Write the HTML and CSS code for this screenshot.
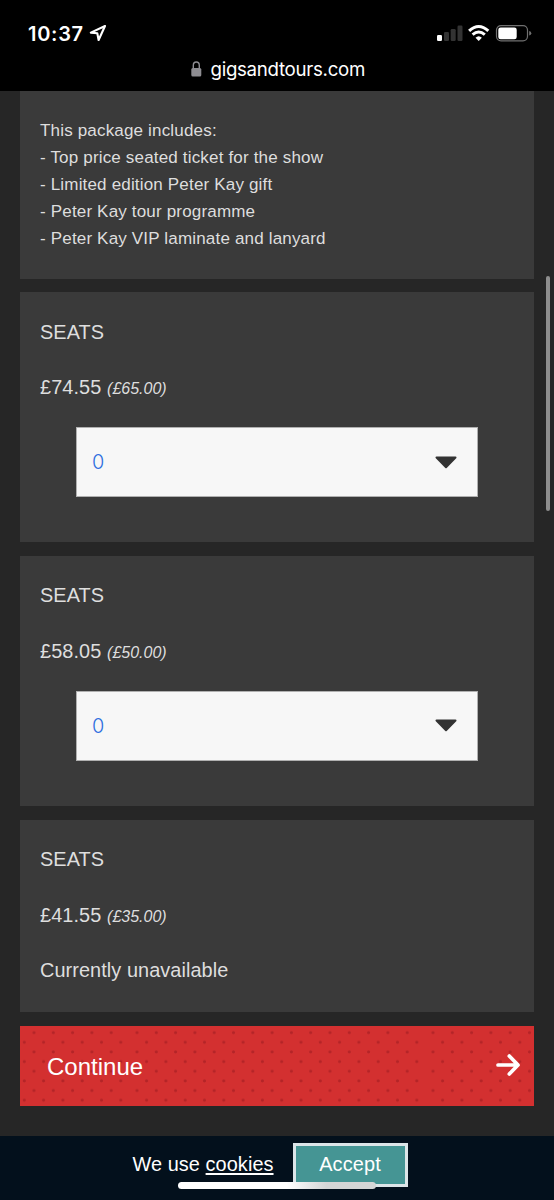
FILE: index.html
```html
<!DOCTYPE html>
<html lang="en">
<head>
<meta charset="utf-8">
<title>gigsandtours.com</title>
<link rel="stylesheet" href="styles.css">
</head>
<body>
<header class="browser-bar">
  <div class="status">
    <span class="time">10:37</span>
    <svg class="location" width="18" height="18" viewBox="0 0 18 18"><path d="M16 2 1.8 8.6 8.3 9.3 9.6 16Z" fill="none" stroke="#fff" stroke-width="2.1" stroke-linejoin="round"/></svg>
    <svg class="indicators" width="96" height="20" viewBox="0 0 96 20">
      <g fill="#333"><rect x="7" y="8" width="5" height="9" rx="1.2"/><rect x="13.7" y="5" width="5" height="12" rx="1.2"/><rect x="20.5" y="1.5" width="5" height="15.5" rx="1.2"/></g>
      <rect x="0" y="11" width="5" height="6" rx="1.2" fill="#fff"/>
      <g fill="none" stroke="#fff" stroke-width="3"><path d="M32.1 6.9Q41.7-1.9 51.3 6.9"/><path d="M35.6 10.7Q41.7 5.4 47.8 10.7"/></g>
      <path d="M38.5 13.7Q41.7 10.7 44.9 13.7L41.7 17Z" fill="#fff"/>
      <rect x="59.5" y="1.6" width="31" height="15.2" rx="4.5" fill="none" stroke="#707070" stroke-width="1.2"/>
      <rect x="61.3" y="3.4" width="18.4" height="11.8" rx="2.3" fill="#fff"/>
      <path d="M92.2 7Q94.3 7.4 94.3 9.3T92.2 11.6Z" fill="#707070"/>
    </svg>
  </div>
  <div class="address">
    <svg width="11" height="16" viewBox="0 0 11 16"><rect x=".3" y="7" width="10" height="8.5" rx="1.5" fill="#8e8d92"/><path d="M2.3 8V4.5C2.3-.1 8.3-.1 8.3 4.5V8" fill="none" stroke="#8e8d92" stroke-width="1.4"/></svg>
    <span>gigsandtours.com</span>
  </div>
</header>
<main class="page">
  <section class="card package">
    <p>This package includes:<br>- Top price seated ticket for the show<br>- Limited edition Peter Kay gift<br>- Peter Kay tour programme<br>- Peter Kay VIP laminate and lanyard</p>
  </section>
  <section class="card seats">
    <h2>SEATS</h2>
    <p class="price">£74.55 <em>(£65.00)</em></p>
    <div class="select"><span>0</span><svg width="22" height="13" viewBox="0 0 22 13"><path d="M1.5 1.5H20.5L11 11.2Z" fill="#333" stroke="#333" stroke-width="2" stroke-linejoin="round"/></svg></div>
  </section>
  <section class="card seats">
    <h2>SEATS</h2>
    <p class="price">£58.05 <em>(£50.00)</em></p>
    <div class="select"><span>0</span><svg width="22" height="13" viewBox="0 0 22 13"><path d="M1.5 1.5H20.5L11 11.2Z" fill="#333" stroke="#333" stroke-width="2" stroke-linejoin="round"/></svg></div>
  </section>
  <section class="card unavailable">
    <h2>SEATS</h2>
    <p class="price">£41.55 <em>(£35.00)</em></p>
    <p class="note">Currently unavailable</p>
  </section>
  <div class="continue">
    <svg class="dots" width="514" height="80" viewBox="0 0 514 80">
      <defs><pattern id="dot" width="19.3" height="19.3" patternUnits="userSpaceOnUse"><circle cx="14" cy="6.6" r="1.6"/><circle cx="4.3" cy="16.2" r="1.6"/></pattern></defs>
      <rect width="105" height="80" fill="url(#dot)"/>
      <g transform="translate(103)"><rect x="9" width="289" height="80" fill="url(#dot)"/></g>
      <g transform="translate(399)"><rect x="9" width="106" height="80" fill="url(#dot)"/></g>
    </svg>
    <span class="label">Continue</span>
    <svg class="arrow" width="24" height="22" viewBox="0 0 24 22"><path d="M2 11H21M13.3 2 22 11 13.3 20" fill="none" stroke="#fff" stroke-width="3.7" stroke-linecap="round" stroke-linejoin="round"/></svg>
  </div>
</main>
<footer class="cookie-bar">
  <p>We use <a>cookies</a></p>
  <button>Accept</button>
</footer>
<div class="scrollbar"></div>
<div class="home-indicator"></div>
</body>
</html>
```

FILE: styles.css
```css
* { box-sizing: border-box; }
body {
  margin: 0;
  width: 554px;
  height: 1200px;
  position: relative;
  display: flex;
  flex-direction: column;
  overflow: hidden;
  background: #262626;
  color: #dedede;
  font-family: "Liberation Sans", Arial, sans-serif;
}
h2, p { margin: 0; font-weight: normal; }
svg { display: block; flex: none; }
.browser-bar {
  height: 91px;
  background: #000;
  color: #fff;
  font-family: Inter, sans-serif;
}
.status {
  height: 57px;
  padding: 24px 21px 0 28px;
  display: flex;
  align-items: flex-start;
}
.time { font-size: 20px; line-height: 20px; font-weight: 600; letter-spacing: 0.7px; }
.location { margin-left: 5px; }
.indicators { margin-left: auto; }
.address {
  display: flex;
  gap: 9px;
  align-items: center;
  padding-left: 190.5px;
  height: 24px;
  font-size: 18.7px;
  letter-spacing: -0.3px;
}
.page {
  height: 1045px;
  padding: 0 20px;
  display: flex;
  flex-direction: column;
  gap: 13.5px;
}
.card { background: #3a3a3a; padding: 0 20px; flex: none; }
.package {
  height: 187.5px;
  padding-top: 27.4px;
  font-size: 17.05px;
  line-height: 26.85px;
  letter-spacing: 0.16px;
}
.seats { height: 250.3px; }
.unavailable { height: 192.5px; }
h2 {
  padding-top: 26.5px;
  font-size: 19.9px;
  line-height: 27px;
  letter-spacing: 0.1px;
}
.price {
  height: 53.5px;
  padding-top: 27.5px;
  font-size: 19.9px;
  line-height: 28px;
  letter-spacing: 0.1px;
}
.price em { font-size: 16px; letter-spacing: 0; }
.note { padding-top: 29.5px; font-size: 19.9px; line-height: 28px; letter-spacing: 0.07px; }
.select {
  margin: 28.2px 36px 0;
  height: 70px;
  border: 1.5px solid #b0b0b0;
  background: #f7f7f7;
  color: #2f6fe0;
  padding: 0 20.5px 0 15px;
  display: flex;
  align-items: center;
  justify-content: space-between;
  font: 300 19.9px Inter, sans-serif;
}
.continue {
  position: relative;
  height: 80px;
  background: #d33030;
  color: #fff;
  display: flex;
  align-items: center;
  justify-content: space-between;
  padding: 0 14px 0 27px;
  flex: none;
}
.dots { position: absolute; inset: 0; fill: #b42427; }
.label { position: relative; font-size: 24px; padding-top: 2px; }
.arrow { position: relative; margin-bottom: 2px; }
.cookie-bar {
  height: 64px;
  padding: 7px 0 0 132.5px;
  display: flex;
  gap: 19px;
  align-items: flex-start;
  background: #03101c;
  color: #fff;
  font-size: 19.9px;
}
.cookie-bar p { line-height: 43px; letter-spacing: 0.07px; }
.cookie-bar a { text-decoration: underline; text-decoration-thickness: 1.5px; text-underline-offset: 2px; }
.cookie-bar button {
  width: 115px;
  height: 44px;
  padding: 0 0 2px;
  border: 3px solid #dce5e8;
  background: #459594;
  color: #fff;
  font: inherit;
  letter-spacing: 0.15px;
}
.scrollbar {
  position: absolute;
  left: 546px;
  top: 276px;
  width: 4px;
  height: 235px;
  border-radius: 2px;
  background: #8e8e8e;
}
.home-indicator {
  position: absolute;
  left: 178px;
  top: 1182px;
  width: 198px;
  height: 7px;
  border-radius: 4px;
  background: linear-gradient(90deg, #fff 55%, #d4d6d6 75%);
}
```
